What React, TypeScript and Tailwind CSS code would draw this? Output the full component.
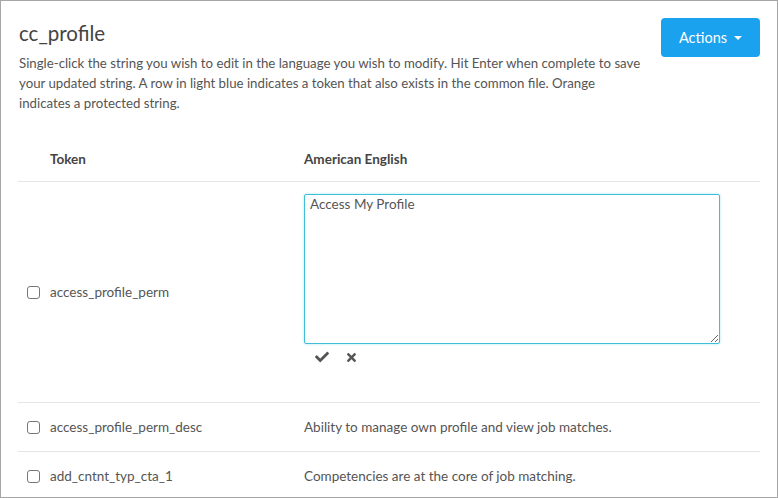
import React from "react";
import { FaCheck, FaTimes } from "react-icons/fa";

const font = { fontFamily: "Lato, 'Open Sans', sans-serif" };

function Checkbox() {
  return <span className="inline-block w-[13px] h-[13px] rounded-[3px] border border-[#767676] bg-white shrink-0" />;
}

export default function App() {
  return (
    <div className="w-[778px] h-[498px] overflow-hidden bg-white border border-[#a6a6a6] text-[#555]" style={font}>
      <div className="flex justify-between pl-[18px] pr-[17px] pt-[18px]">
        <div className="w-[622px]">
          <h1 className="text-[20.5px] leading-[30px] text-[#444] -mt-[1px]">cc_profile</h1>
          <p className="text-[13.25px] leading-[20px] mt-[5px]">
            Single-click the string you wish to edit in the language you wish to modify. Hit Enter when complete to save your updated string. A row in light blue indicates a token that also exists in the common file. Orange indicates a protected string.
          </p>
        </div>
        <button className="h-[39px] w-[99px] -mt-[1px] rounded-[4px] bg-[#1ba2ef] text-white text-[14.5px] flex items-center justify-center gap-[7px]">
          Actions
          <span className="inline-block w-0 h-0 border-l-[4px] border-r-[4px] border-t-[4px] border-l-transparent border-r-transparent border-t-white" />
        </button>
      </div>
      <div className="mx-[17px] mt-[25px] text-[13.5px]">
        <div className="flex items-center h-[44px] border-b border-[#e5e5e5] font-bold text-[#444]">
          <div className="w-[286px] pl-[32px]">Token</div>
          <div>American English</div>
        </div>
        <div className="flex items-center h-[221px] border-b border-[#e5e5e5]">
          <div className="w-[286px] flex items-center pl-[9px] gap-[10px]">
            <Checkbox />
            <span>access_profile_perm</span>
          </div>
          <div className="flex-1 self-start pt-[12px]">
            <textarea
              defaultValue="Access My Profile"
              className="block w-[416px] h-[150px] border border-[#3ebfd6] rounded-[2px] px-[5px] py-0 leading-[18px] text-[13.5px] text-[#555] outline-none shadow-[0_0_3px_rgba(62,191,214,0.4)]"
              style={font}
            />
            <div className="flex items-center gap-[16px] pl-[11px] mt-[6px] text-[#555]">
              <FaCheck size={14} />
              <FaTimes size={13} />
            </div>
          </div>
        </div>
        <div className="flex items-center h-[49px] border-b border-[#e5e5e5]">
          <div className="w-[286px] flex items-center pl-[9px] gap-[10px]">
            <Checkbox />
            <span>access_profile_perm_desc</span>
          </div>
          <div>Ability to manage own profile and view job matches.</div>
        </div>
        <div className="flex items-center h-[49px] border-b border-[#e5e5e5]">
          <div className="w-[286px] flex items-center pl-[9px] gap-[10px]">
            <Checkbox />
            <span>add_cntnt_typ_cta_1</span>
          </div>
          <div>Competencies are at the core of job matching.</div>
        </div>
      </div>
    </div>
  );
}
